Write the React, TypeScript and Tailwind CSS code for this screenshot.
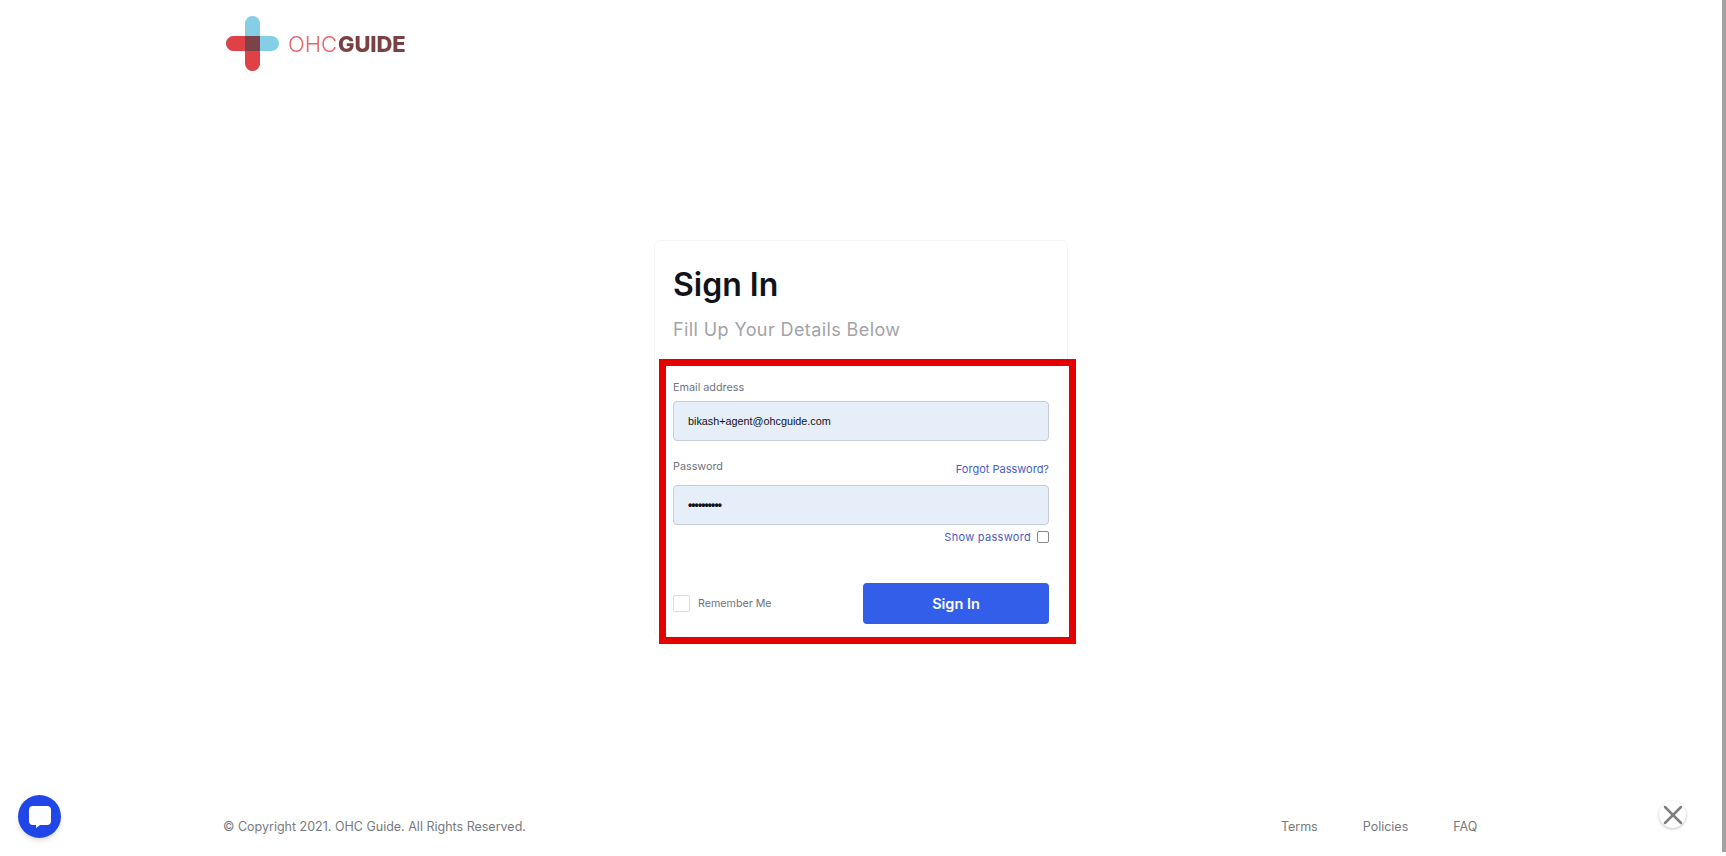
import { X } from 'lucide-react'

function Logo() {
  return (
    <div className="flex items-center blur-[0.6px]">
      <svg width="53" height="55" viewBox="0 0 53 55" className="shrink-0">
        <rect x="19" y="0" width="15" height="55" rx="7.5" fill="#85cfe6" />
        <rect x="0" y="20" width="53" height="15" rx="7.5" fill="#85cfe6" />
        <path d="M7.5 20H19V35H7.5A7.5 7.5 0 0 1 7.5 20Z" fill="#e04146" />
        <path d="M19 35H34V47.5A7.5 7.5 0 0 1 19 47.5Z" fill="#e04146" />
        <rect x="19" y="20" width="15" height="15" fill="#7d4247" />
      </svg>
      <span className="ml-[9px] flex items-baseline text-[22px] leading-none">
        <span className="font-light text-[#e8636a]">OHC</span>
        <span className="ml-[1px] font-extrabold tracking-[-0.1px] text-[#7a4145]">GUIDE</span>
      </span>
    </div>
  )
}

function Field({ value, secret }: { value: string; secret?: boolean }) {
  return (
    <div className="flex h-10 items-center rounded-[4px] border border-[#c5ccd6] bg-[#e6eefa] px-[14px]">
      <span className={`font-['Liberation_Sans',sans-serif] text-[#10131a] ${secret ? 'text-[12px] font-bold tracking-[-0.9px]' : 'text-[10.8px]'}`}>
        {value}
      </span>
    </div>
  )
}

export default function App() {
  return (
    <div className="relative flex h-[856px] flex-col overflow-hidden bg-white font-['Inter',sans-serif]">
      <header className="pl-[226px] pt-[16px]">
        <Logo />
      </header>

      <main className="flex flex-1 justify-center pt-[169px] pr-[4px]">
        <div className="relative h-[397px] w-[414px] rounded-[6px] border border-[#f5f5f7] bg-white px-[18px] pt-[24px]">
          <h1 className="text-[32px] font-semibold leading-[40px] text-[#12131a]">Sign In</h1>
          <p className="mt-[13px] text-[18px] leading-[24px] tracking-[0.4px] text-[#a3a3a8]">Fill Up Your Details Below</p>

          <div className="mt-[38px]">
            <label className="block text-[10.8px] leading-[16px] text-[#6f7380]">Email address</label>
            <div className="mt-[5px]">
              <Field value="bikash+agent@ohcguide.com" />
            </div>
          </div>

          <div className="mt-[18px]">
            <div className="flex justify-between">
              <label className="text-[10.8px] leading-[16px] text-[#6f7380]">Password</label>
              <a className="mt-[2px] text-[11px] leading-[16px] text-[#4a5bc4]">Forgot Password?</a>
            </div>
            <div className="mt-[8px]">
              <Field value="••••••••••" secret />
            </div>
            <div className="mt-[4px] flex items-center justify-end gap-[6px]">
              <span className="text-[11px] leading-[16px] tracking-[0.3px] text-[#4a5bc4]">Show password</span>
              <span className="h-[12px] w-[12px] rounded-[2px] border border-[#85878c] bg-white" />
            </div>
          </div>

          <div className="mt-[38px] flex items-center justify-between">
            <div className="flex items-center gap-[8px]">
              <span className="h-[17px] w-[17px] rounded-[2px] border border-[#dcdde0] bg-white" />
              <span className="text-[10.7px] leading-[16px] text-[#6f7380]">Remember Me</span>
            </div>
            <button className="h-[41px] w-[186px] rounded-[4px] bg-[#335eea] text-[14.5px] font-semibold text-white">Sign In</button>
          </div>

          {/* annotation drawn over the form */}
          <div className="absolute left-[4px] top-[118px] h-[285px] w-[417px] border-[7px] border-[#e60000]" />
        </div>
      </main>

      <footer className="flex items-center pb-[20px] pl-[223px] text-[12.5px] leading-[18px] text-[#77797f]">
        <span>© Copyright 2021. OHC Guide. All Rights Reserved.</span>
        <nav className="ml-[755px] flex">
          <a>Terms</a>
          <a className="ml-[45px]">Policies</a>
          <a className="ml-[45px]">FAQ</a>
        </nav>
      </footer>

      {/* chat launcher */}
      <button className="absolute bottom-[18px] left-[18px] flex h-[43px] w-[43px] items-center justify-center rounded-full bg-[#2046e8] shadow-md">
        <svg width="22" height="22" viewBox="0 0 22 22">
          <path d="M4 0H18A4 4 0 0 1 22 4V15A4 4 0 0 1 18 19H11L7 22V19H4A4 4 0 0 1 0 15V4A4 4 0 0 1 4 0Z" fill="#fff" />
        </svg>
      </button>

      {/* dismiss */}
      <button className="absolute bottom-[28px] right-[40px] flex h-[27px] w-[27px] items-center justify-center rounded-full bg-white shadow-[0_1px_3px_rgba(0,0,0,0.25)]">
        <X className="h-[32px] w-[32px] shrink-0 text-[#7f7f7f]" strokeWidth={1.9} />
      </button>

      {/* scrollbar */}
      <div className="absolute right-0 top-0 h-[852px] w-[4px] bg-[#a3a3a3]" />
    </div>
  )
}
